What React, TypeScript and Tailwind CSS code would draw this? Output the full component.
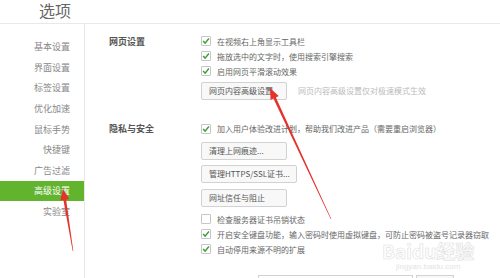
import React from 'react';

const navItems = ['基本设置', '界面设置', '标签设置', '优化加速', '鼠标手势', '快捷键', '广告过滤', '高级设置', '实验室'];
const activeNav = '高级设置';

// tapered annotation arrow, tail -> tip
function arrowPoints(tx: number, ty: number, px: number, py: number) {
  const len = Math.hypot(px - tx, py - ty);
  const dx = (px - tx) / len;
  const dy = (py - ty) / len;
  const nx = -dy;
  const ny = dx;
  const head = 11;
  const bx = px - dx * head;
  const by = py - dy * head;
  const pts = [
    [tx + nx * 0.3, ty + ny * 0.3],
    [bx + nx * 1.4, by + ny * 1.4],
    [bx + nx * 4.5, by + ny * 4.5],
    [px, py],
    [bx - nx * 4.5, by - ny * 4.5],
    [bx - nx * 1.4, by - ny * 1.4],
    [tx - nx * 0.3, ty - ny * 0.3],
  ];
  return pts.map(([x, y]) => `${x.toFixed(1)},${y.toFixed(1)}`).join(' ');
}

function Check({ checked }: { checked?: boolean }) {
  return (
    <span className="w-[10px] h-[10px] border border-[#c6c6c6] rounded-[1px] bg-white flex items-center justify-center shrink-0">
      {checked && (
        <svg width="8" height="8" viewBox="0 0 8 8">
          <path d="M1.1 4.1 L3.1 6.1 L6.9 1.5" fill="none" stroke="#3f9c35" strokeWidth="1.4" />
        </svg>
      )}
    </span>
  );
}

function CheckRow({ label, checked = true }: { label: string; checked?: boolean }) {
  return (
    <div className="flex items-center gap-[6px] h-[15px] text-[8px] leading-[15px] text-[#666] whitespace-nowrap">
      <Check checked={checked} />
      <span>{label}</span>
    </div>
  );
}

function Btn({ children }: { children: React.ReactNode }) {
  return (
    <button
      type="button"
      className="h-[18px] min-w-[86px] pl-[7px] pr-[6px] text-left border border-[#d2d2d2] rounded-[2px] bg-[#f8f8f8] text-[8px] leading-[16px] text-[#555] whitespace-nowrap"
    >
      {children}
    </button>
  );
}

export default function App() {
  return (
    <div className="relative w-[500px] h-[278px] overflow-hidden bg-white font-['Noto_Sans_CJK_SC','Noto_Sans',sans-serif]">
      {/* Header */}
      <header className="h-[24px] border-b border-[#e8e8e8] pl-[39px] overflow-visible">
        <h1 className="text-[16px] leading-[21px] text-[#666]">选项</h1>
      </header>

      <div className="flex h-[254px]">
        {/* Sidebar */}
        <nav className="w-[85px] shrink-0 border-r border-[#e8e8e8] pt-[12.7px]">
          <ul>
            {navItems.map((item) => {
              const isActive = item === activeNav;
              return (
                <li
                  key={item}
                  className={
                    isActive
                      ? 'h-[20.6px] flex items-center justify-end pr-[14px] text-[9px] bg-[#62b42f] text-white'
                      : 'h-[20.6px] flex items-center justify-end pr-[14px] text-[9px] text-[#888]'
                  }
                >
                  {item}
                </li>
              );
            })}
          </ul>
        </nav>

        {/* Content */}
        <main className="flex-1 pl-[24px]">
          <section className="flex pt-[9.5px]">
            <h3 className="w-[92px] shrink-0 h-[15px] leading-[15px] text-[9px] font-bold text-[#555]">网页设置</h3>
            <div className="flex flex-col">
              <CheckRow label="在视频右上角显示工具栏" />
              <CheckRow label="拖放选中的文字时，使用搜索引擎搜索" />
              <CheckRow label="启用网页平滑滚动效果" />
              <div className="flex items-center mt-[3.5px]">
                <Btn>网页内容高级设置</Btn>
                <span className="ml-[11px] text-[8px] text-[#bbb] whitespace-nowrap">网页内容高级设置仅对极速模式生效</span>
              </div>
            </div>
          </section>

          <section className="flex mt-[21px]">
            <h3 className="w-[92px] shrink-0 h-[15px] leading-[15px] text-[9px] font-bold text-[#555]">隐私与安全</h3>
            <div className="flex flex-col">
              <CheckRow label="加入用户体验改进计划，帮助我们改进产品（需要重启浏览器）" />
              <div className="flex flex-col items-start gap-[5.5px] mt-[5.5px]">
                <Btn>清理上网痕迹...</Btn>
                <Btn>管理HTTPS/SSL证书...</Btn>
                <Btn>网址信任与阻止</Btn>
              </div>
              <div className="flex flex-col mt-[5px]">
                <CheckRow label="检查服务器证书吊销状态" checked={false} />
                <CheckRow label="开启安全键盘功能，输入密码时使用虚拟键盘，可防止密码被盗号记录器窃取" />
                <CheckRow label="自动停用来源不明的扩展" />
              </div>
              <div className="flex gap-[3px] mt-[18.5px] ml-[57px]">
                <div className="w-[155px] h-[20px] border border-[#d2d2d2] bg-white" />
                <div className="w-[38px] h-[20px] border border-[#d2d2d2] bg-[#f8f8f8]" />
              </div>
            </div>
          </section>
        </main>
      </div>

      {/* Baidu watermark */}
      <div className="absolute left-[382px] top-[240px] flex flex-col items-center pointer-events-none">
        <span className="text-[19px] leading-[22px] font-bold text-white/80 [-webkit-text-stroke:0.6px_#dedede]">Baidu经验</span>
        <span className="text-[8px] leading-[9px] text-[#e4e4e4] font-['Liberation_Sans',sans-serif]">jingyan.baidu.com</span>
      </div>

      {/* Red annotation arrows */}
      <svg className="absolute inset-0 pointer-events-none" width="500" height="278">
        <polygon points={arrowPoints(331, 219, 270, 88)} fill="#e5322b" />
        <polygon points={arrowPoints(73, 251, 63, 189)} fill="#e5322b" />
      </svg>
    </div>
  );
}
